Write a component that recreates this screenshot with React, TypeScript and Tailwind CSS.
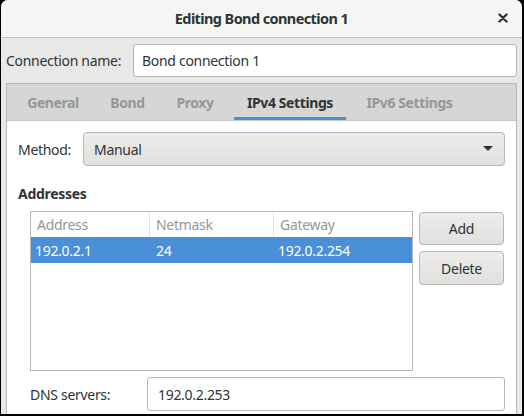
import React from 'react';

const font = { fontFamily: '"Noto Sans", "DejaVu Sans", sans-serif' };

const tabs = [
  { label: 'General', cls: 'ml-[7px] w-[78px]' },
  { label: 'Bond', cls: 'ml-[3px] w-[65px]' },
  { label: 'Proxy', cls: 'ml-[3px] w-[64px]' },
  { label: 'IPv4 Settings', cls: 'ml-[7px] w-[112px]', active: true },
  { label: 'IPv6 Settings', cls: 'ml-[7px] w-[113px]' },
];

function CloseIcon() {
  return (
    <svg width="10" height="10" viewBox="0 0 10 10">
      <path d="M1.5 1.5 L8.5 8.5 M8.5 1.5 L1.5 8.5" stroke="#2e3436" strokeWidth="2.4" strokeLinecap="round" />
    </svg>
  );
}

export default function App() {
  return (
    <div className="w-[524px] h-[416px] bg-black overflow-hidden" style={font}>
      <div className="ml-px mr-[2px] h-[414px] overflow-hidden rounded-t-[7px] bg-[#e8e8e7] text-[14px] tracking-[-0.3px] text-[#2e3436]">
        {/* Title bar */}
        <div className="relative flex h-[38px] items-center justify-center border-b border-[#c0c0bd] bg-[#f5f5f4]">
          <span className="font-bold text-[14.5px] tracking-[-0.6px]">Editing Bond connection 1</span>
          <div className="absolute right-[14px] top-[13px]">
            <CloseIcon />
          </div>
        </div>

        <div className="px-[5px] pt-[6px]">
          {/* Connection name */}
          <div className="flex items-center">
            <span className="w-[127px] shrink-0">Connection name:</span>
            <div className="flex h-[33px] flex-1 items-center rounded-[3px] border border-[#b6b6b3] bg-white px-[8px]">
              Bond connection 1
            </div>
          </div>

          {/* Notebook */}
          <div className="mt-[6px] border border-[#b6b6b3] bg-white">
            <div className="flex h-[37px] border-b border-[#c8c8c6] bg-[#d6d6d5]">
              {tabs.map((t) => (
                <div
                  key={t.label}
                  className={`${t.cls} flex h-full items-center justify-center font-bold tracking-[-0.4px] ${
                    t.active ? 'text-[#2e3436] shadow-[inset_0_-3px_0_#4a90d9]' : 'text-[#949796]'
                  }`}
                >
                  {t.label}
                </div>
              ))}
            </div>

            <div className="px-[11px] pt-[11px]">
              {/* Method */}
              <div className="flex items-center">
                <span className="w-[65px] shrink-0">Method:</span>
                <div className="flex h-[34px] flex-1 items-center justify-between rounded-[4px] border border-[#b6b6b3] bg-gradient-to-b from-[#ededec] to-[#e0e0df] px-[10px]">
                  <span>Manual</span>
                  <svg width="10" height="6" viewBox="0 0 10 6" className="mr-[1px]">
                    <path d="M0 0 L10 0 L5 5 Z" fill="#2e3436" />
                  </svg>
                </div>
              </div>

              <div className="mt-[17px] font-bold">Addresses</div>

              {/* Addresses table + buttons */}
              <div className="mt-[7px] flex pl-[12px]">
                <div className="h-[160px] w-[383px] border border-[#b6b6b3] bg-white">
                  <div className="grid h-[25px] grid-cols-[119px_124px_137px] items-center text-[#949796]">
                    <div className="h-full border-r border-[#e4e4e3] pl-[6px] leading-[25px]">Address</div>
                    <div className="h-full border-r border-[#e4e4e3] pl-[6px] leading-[25px]">Netmask</div>
                    <div className="h-full pl-[6px] leading-[25px]">Gateway</div>
                  </div>
                  <div className="grid h-[26px] grid-cols-[120px_124px_137px] items-center bg-[#4a90d9] text-white">
                    <div className="pl-[4px]">192.0.2.1</div>
                    <div className="pl-[5px]">24</div>
                    <div className="pl-[3px]">192.0.2.254</div>
                  </div>
                </div>

                <div className="ml-[6px] flex w-[85px] flex-col gap-[6px] pt-[1px]">
                  <div className="flex h-[33px] items-center justify-center rounded-[4px] border border-[#b6b6b3] bg-gradient-to-b from-[#ededec] to-[#e0e0df]">
                    Add
                  </div>
                  <div className="flex h-[34px] items-center justify-center rounded-[4px] border border-[#b6b6b3] bg-gradient-to-b from-[#ededec] to-[#e0e0df]">
                    Delete
                  </div>
                </div>
              </div>

              {/* DNS */}
              <div className="mt-[6px] flex items-center pl-[12px]">
                <span className="w-[117px] shrink-0">DNS servers:</span>
                <div className="flex h-[34px] flex-1 items-center rounded-[3px] border border-[#b6b6b3] bg-white px-[10px]">
                  192.0.2.253
                </div>
              </div>
              <div className="h-[20px]" />
            </div>
          </div>
        </div>
      </div>
    </div>
  );
}
